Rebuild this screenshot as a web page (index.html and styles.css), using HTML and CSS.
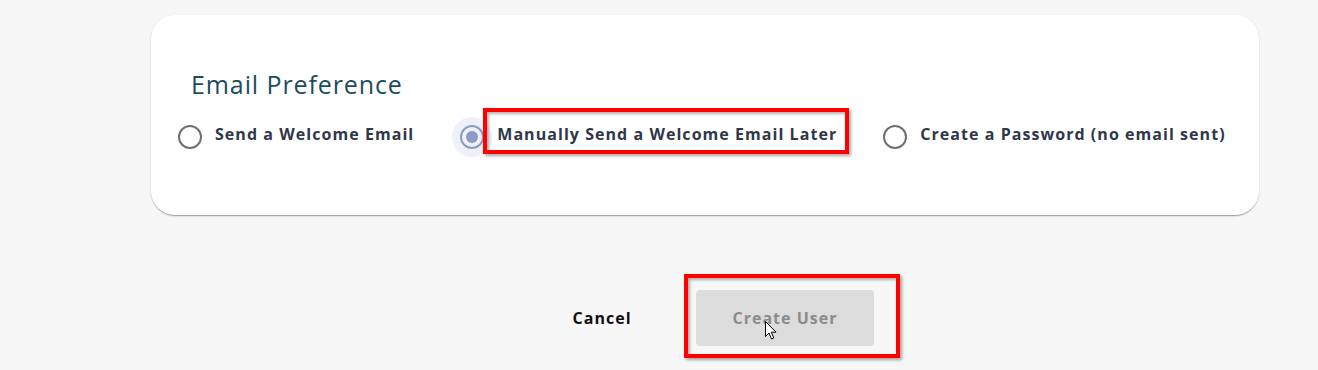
FILE: index.html
```html
<!DOCTYPE html>
<html lang="en">
<head>
<meta charset="utf-8">
<title>Email Preference</title>
<link rel="stylesheet" href="styles.css">
</head>
<body>
<div class="page">
  <section class="card">
    <h2 class="card-title">Email Preference</h2>
    <div class="options">
      <label class="option">
        <span class="radio">
          <svg viewBox="0 0 24 24" width="24" height="24"><circle cx="12" cy="12" r="11" fill="none" stroke="#707070" stroke-width="2"/></svg>
        </span>
        <span class="option-label">Send a Welcome Email</span>
      </label>
      <label class="option">
        <span class="radio radio-checked">
          <svg viewBox="0 0 24 24" width="24" height="24"><circle cx="12" cy="12" r="11" fill="none" stroke="#8a9bc6" stroke-width="2"/><circle cx="12" cy="12" r="6" fill="#8a9bc6"/></svg>
        </span>
        <span class="option-label highlighted">Manually Send a Welcome Email Later<span class="mark mark-label"></span></span>
      </label>
      <label class="option">
        <span class="radio">
          <svg viewBox="0 0 24 24" width="24" height="24"><circle cx="12" cy="12" r="11" fill="none" stroke="#707070" stroke-width="2"/></svg>
        </span>
        <span class="option-label">Create a Password (no email sent)</span>
      </label>
    </div>
  </section>
  <div class="actions">
    <button class="btn btn-text">Cancel</button>
    <div class="btn-wrap">
      <button class="btn btn-disabled">Create User</button>
      <span class="mark mark-button"></span>
      <svg class="cursor" viewBox="0 0 12 19" width="12" height="19"><path d="M0.5 0.5 L0.5 15.5 L4 12 L6.5 18 L8.8 17 L6.3 11.2 L11 11.2 Z" fill="#fff" stroke="#000" stroke-width="1" stroke-linejoin="round"/></svg>
    </div>
  </div>
</div>
</body>
</html>
```
FILE: styles.css
```css
html, body {
  margin: 0;
  padding: 0;
  background: #f7f7f7;
}
body {
  font-family: "Open Sans", "Liberation Sans", sans-serif;
  min-height: 370px;
}
.page {
  width: 1108px;
  padding: 15px 0 24px 151px;
}
.card {
  background: #fff;
  border-radius: 24px;
  box-shadow: 0 2px 1px -1px rgba(0,0,0,0.2), 0 1px 1px 0 rgba(0,0,0,0.12), 0 1px 3px 0 rgba(0,0,0,0.10);
  padding: 54px 0 58px 0;
}
.card-title {
  margin: 0 0 18px 40px;
  font-size: 25px;
  line-height: 30px;
  font-weight: 500;
  letter-spacing: 0.9px;
  color: #1b4d5c;
}
.options {
  display: flex;
  gap: 38px;
  padding-left: 19px;
}
.option {
  display: flex;
  align-items: flex-start;
  gap: 5px;
}
.radio {
  width: 40px;
  height: 40px;
  border-radius: 50%;
  display: flex;
  align-items: center;
  justify-content: center;
  flex: none;
}
.radio svg { display: block; }
.radio-checked {
  background: #eef1f7;
}
.option-label {
  margin-top: 7px;
  font-size: 16px;
  line-height: 20px;
  font-weight: 700;
  letter-spacing: 1.05px;
  color: #2f3749;
  white-space: nowrap;
}
.highlighted {
  position: relative;
}
.mark {
  position: absolute;
  border: 4px solid #ff0000;
  box-shadow: 2px 2px 3px rgba(0,0,0,0.35), inset 2px 2px 3px rgba(0,0,0,0.30);
  pointer-events: none;
}
.mark-label {
  left: -14px;
  top: -16px;
  right: -12px;
  bottom: -10px;
}
.actions {
  display: flex;
  justify-content: center;
  gap: 27px;
  margin-top: 75px;
}
.btn-wrap {
  position: relative;
}
.btn {
  display: block;
  font-family: "Open Sans", "Liberation Sans", sans-serif;
  font-size: 16px;
  font-weight: 700;
  letter-spacing: 1px;
  height: 56px;
  padding: 0 37px;
  border: none;
  border-radius: 4px;
  background: transparent;
}
.btn-text {
  color: #111;
}
.btn-disabled {
  background: #dcdcdc;
  color: #8b8b8b;
}
.mark-button {
  left: -12px;
  top: -16px;
  right: -26px;
  bottom: -12px;
}
.cursor {
  position: absolute;
  left: 69px;
  top: 31px;
}
```
